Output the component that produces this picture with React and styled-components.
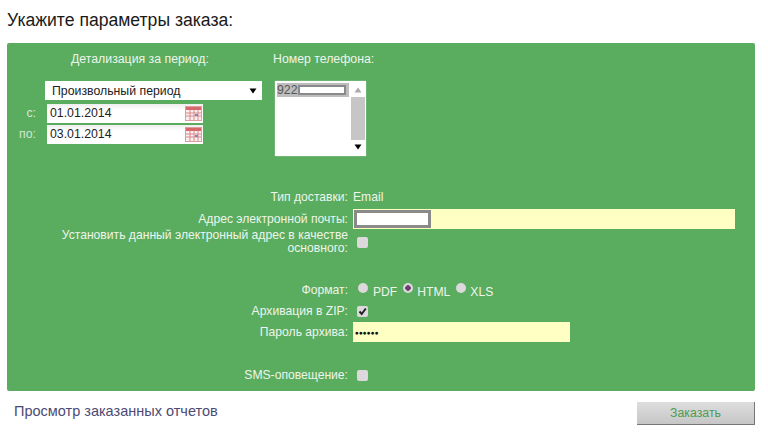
import React from "react";
import styled, { createGlobalStyle } from "styled-components";

const GlobalStyle = createGlobalStyle`
  html, body {
    margin: 0;
    padding: 0;
    background: #fff;
    overflow: hidden;
  }
  body {
    font-family: "Liberation Sans", Arial, sans-serif;
  }
`;

const Page = styled.div`
  width: 768px;
  height: 432px;
  padding: 10px 13px 0 7px;
  box-sizing: border-box;
`;

const Title = styled.h1`
  margin: 0;
  height: 33px;
  font-size: 17.6px;
  line-height: 21px;
  font-weight: 400;
  color: #1a1a1a;
`;

const Panel = styled.div`
  height: 348px;
  background: #5aac5e;
  border-radius: 2px;
  color: #eef5ec;
  font-size: 12.3px;
  padding-top: 9px;
  box-sizing: border-box;
`;

const TopRow = styled.div`
  display: flex;
  height: 130px;
`;

const PeriodColumn = styled.div`
  width: 266px;
  display: flex;
  flex-direction: column;
`;

const ColumnTitle = styled.div`
  height: 14px;
  line-height: 14px;
`;

const PeriodTitle = styled(ColumnTitle)`
  padding-left: 64px;
  margin-bottom: 15px;
`;

const PeriodSelect = styled.div`
  width: 217px;
  height: 19px;
  margin-left: 38px;
  margin-bottom: 3px;
  padding: 0 5px 0 7px;
  box-sizing: border-box;
  background: #fff;
  color: #222;
  display: flex;
  align-items: center;
  justify-content: space-between;
`;

const DateRow = styled.div`
  display: flex;
  align-items: center;
  height: 20px;
  margin-bottom: 1px;
`;

const DateLabel = styled.span`
  width: 29px;
  text-align: right;
  color: #d3e8d2;
`;

const DateField = styled.div`
  width: 156px;
  height: 19px;
  margin-left: 11px;
  padding: 0 1px 0 3px;
  box-sizing: border-box;
  background: linear-gradient(#eee, #fff 30%);
  color: #222;
  display: flex;
  align-items: center;
  justify-content: space-between;
`;

const PhoneColumn = styled.div`
  display: flex;
  flex-direction: column;
`;

const PhoneList = styled.div`
  width: 91px;
  height: 75px;
  margin: 15px 0 0 2px;
  background: #fff;
  box-shadow: 0 0 1px #ddd;
  display: flex;
  padding: 2px 1px 2px 2px;
  box-sizing: border-box;
`;

const PhoneOptions = styled.div`
  flex: 1;
`;

const PhoneOption = styled.div`
  height: 14px;
  margin-right: 2px;
  background: #bdbdbd;
  color: #555;
  display: flex;
  align-items: center;
  line-height: 14px;
`;

const Redacted = styled.span`
  display: block;
  box-sizing: border-box;
  width: ${(p) => p.$width}px;
  height: ${(p) => p.$height}px;
  background: #fff;
  border: ${(p) => p.$border}px solid #8a8a8a;
`;

const Scrollbar = styled.div`
  width: 14px;
  display: flex;
  flex-direction: column;
  background: #c6c6c6;
`;

const ScrollButton = styled.div`
  height: 14px;
  background: #fff;
  display: flex;
  align-items: center;
  justify-content: center;
`;

const ScrollSpacer = styled.div`
  flex: 1;
`;

const FormRows = styled.div`
  display: flex;
  flex-direction: column;
  margin-top: 8px;
  font-size: 12.15px;
`;

const Row = styled.div`
  display: grid;
  grid-template-columns: 341px 1fr;
  column-gap: 5px;
  align-items: center;
  height: ${(p) => p.$height}px;
  margin-bottom: ${(p) => p.$gap || 0}px;
`;

const Label = styled.div`
  text-align: right;
  line-height: 13px;
`;

const Control = styled.div`
  display: flex;
  align-items: center;
`;

const YellowInput = styled.div`
  width: ${(p) => p.$width}px;
  height: 20px;
  padding-left: 1px;
  box-sizing: border-box;
  background: #ffffc4;
  color: #111;
  display: flex;
  align-items: center;
`;

const Dots = styled.span`
  padding-left: 1px;
  font-size: 6.5px;
`;

const Check = styled.span`
  width: 11px;
  height: 11px;
  margin-left: 4px;
  border-radius: 2px;
  background: #dcd8dc;
  display: flex;
  align-items: center;
  justify-content: center;
`;

const Radio = styled.span`
  width: 10px;
  height: 10px;
  margin: 0 ${(p) => (p.$first ? 5 : 4)}px 6px ${(p) => (p.$first ? 5 : 0)}px;
  border-radius: 50%;
  background: ${(p) => (p.$on ? "radial-gradient(circle, #6b3f70 0 2.5px, #dcd8dc 3px)" : "#dcd8dc")};
`;

const RadioText = styled.span`
  margin-right: 6px;
  padding-top: 3px;
`;

const Footer = styled.div`
  display: flex;
  justify-content: space-between;
  align-items: flex-start;
  padding: 10px 0 0 7px;
`;

const ReportsLink = styled.a`
  font-size: 14.5px;
  line-height: 20px;
  color: #4c4a73;
`;

const OrderButton = styled.button`
  width: 118px;
  height: 23px;
  margin-top: 1px;
  padding: 0;
  border: 0;
  border-right: 1px solid #777;
  border-bottom: 1px solid #777;
  background: linear-gradient(#dedede, #c6c6c6);
  color: #4d9c52;
  font-family: inherit;
  font-size: 12.3px;
`;

const CalendarIcon = () => (
  <svg width="17" height="15" viewBox="0 0 17 15">
    <rect x="0.5" y="0.5" width="16" height="14" fill="#fbeeee" stroke="#d9a0a0" />
    <rect x="1" y="1" width="15" height="3" fill="#d8696b" />
    <path d="M1 7h15M1 10h15M5 4v10M9 4v10M13 4v10" stroke="#d98a8c" strokeWidth="1" />
    <rect x="10" y="8" width="3" height="2" fill="#6f8fc4" />
  </svg>
);

const Triangle = ({ color = "#000", up }) => (
  <svg width="8" height="6" viewBox="0 0 8 6">
    <path d={up ? "M4 0.5L7.5 5.5H0.5Z" : "M0.5 0.5H7.5L4 5.5Z"} fill={color} />
  </svg>
);

const Tick = () => (
  <svg width="11" height="11" viewBox="0 0 11 11">
    <path d="M2.5 5.5L4.7 8L8.8 2.5" fill="none" stroke="#222" strokeWidth="2" />
  </svg>
);

const App = () => (
  <Page>
    <GlobalStyle />
    <Title>Укажите параметры заказа:</Title>
    <Panel>
      <TopRow>
        <PeriodColumn>
          <PeriodTitle>Детализация за период:</PeriodTitle>
          <PeriodSelect>
            Произвольный период
            <Triangle />
          </PeriodSelect>
          <DateRow>
            <DateLabel>с:</DateLabel>
            <DateField>
              01.01.2014
              <CalendarIcon />
            </DateField>
          </DateRow>
          <DateRow>
            <DateLabel>по:</DateLabel>
            <DateField>
              03.01.2014
              <CalendarIcon />
            </DateField>
          </DateRow>
        </PeriodColumn>
        <PhoneColumn>
          <ColumnTitle>Номер телефона:</ColumnTitle>
          <PhoneList>
            <PhoneOptions>
              <PhoneOption>
                922
                <Redacted $width={48} $height={10} $border={2} />
              </PhoneOption>
            </PhoneOptions>
            <Scrollbar>
              <ScrollButton>
                <Triangle up color="#aaa" />
              </ScrollButton>
              <ScrollSpacer />
              <ScrollButton>
                <Triangle />
              </ScrollButton>
            </Scrollbar>
          </PhoneList>
        </PhoneColumn>
      </TopRow>
      <FormRows>
        <Row $height={14} $gap={5}>
          <Label>Тип доставки:</Label>
          <Control>Email</Control>
        </Row>
        <Row $height={20}>
          <Label>Адрес электронной почты:</Label>
          <Control>
            <YellowInput $width={382}>
              <Redacted $width={77} $height={18} $border={3} />
            </YellowInput>
          </Control>
        </Row>
        <Row $height={26} $gap={27}>
          <Label>Установить данный электронный адрес в качестве основного:</Label>
          <Control>
            <Check />
          </Control>
        </Row>
        <Row $height={16} $gap={6}>
          <Label>Формат:</Label>
          <Control>
            <Radio $first />
            <RadioText>PDF</RadioText>
            <Radio $on />
            <RadioText>HTML</RadioText>
            <Radio />
            <RadioText>XLS</RadioText>
          </Control>
        </Row>
        <Row $height={14} $gap={4}>
          <Label>Архивация в ZIP:</Label>
          <Control>
            <Check>
              <Tick />
            </Check>
          </Control>
        </Row>
        <Row $height={20} $gap={26}>
          <Label>Пароль архива:</Label>
          <Control>
            <YellowInput $width={217}>
              <Dots>●●●●●●</Dots>
            </YellowInput>
          </Control>
        </Row>
        <Row $height={14}>
          <Label>SMS-оповещение:</Label>
          <Control>
            <Check />
          </Control>
        </Row>
      </FormRows>
    </Panel>
    <Footer>
      <ReportsLink>Просмотр заказанных отчетов</ReportsLink>
      <OrderButton>Заказать</OrderButton>
    </Footer>
  </Page>
);

export default App;
